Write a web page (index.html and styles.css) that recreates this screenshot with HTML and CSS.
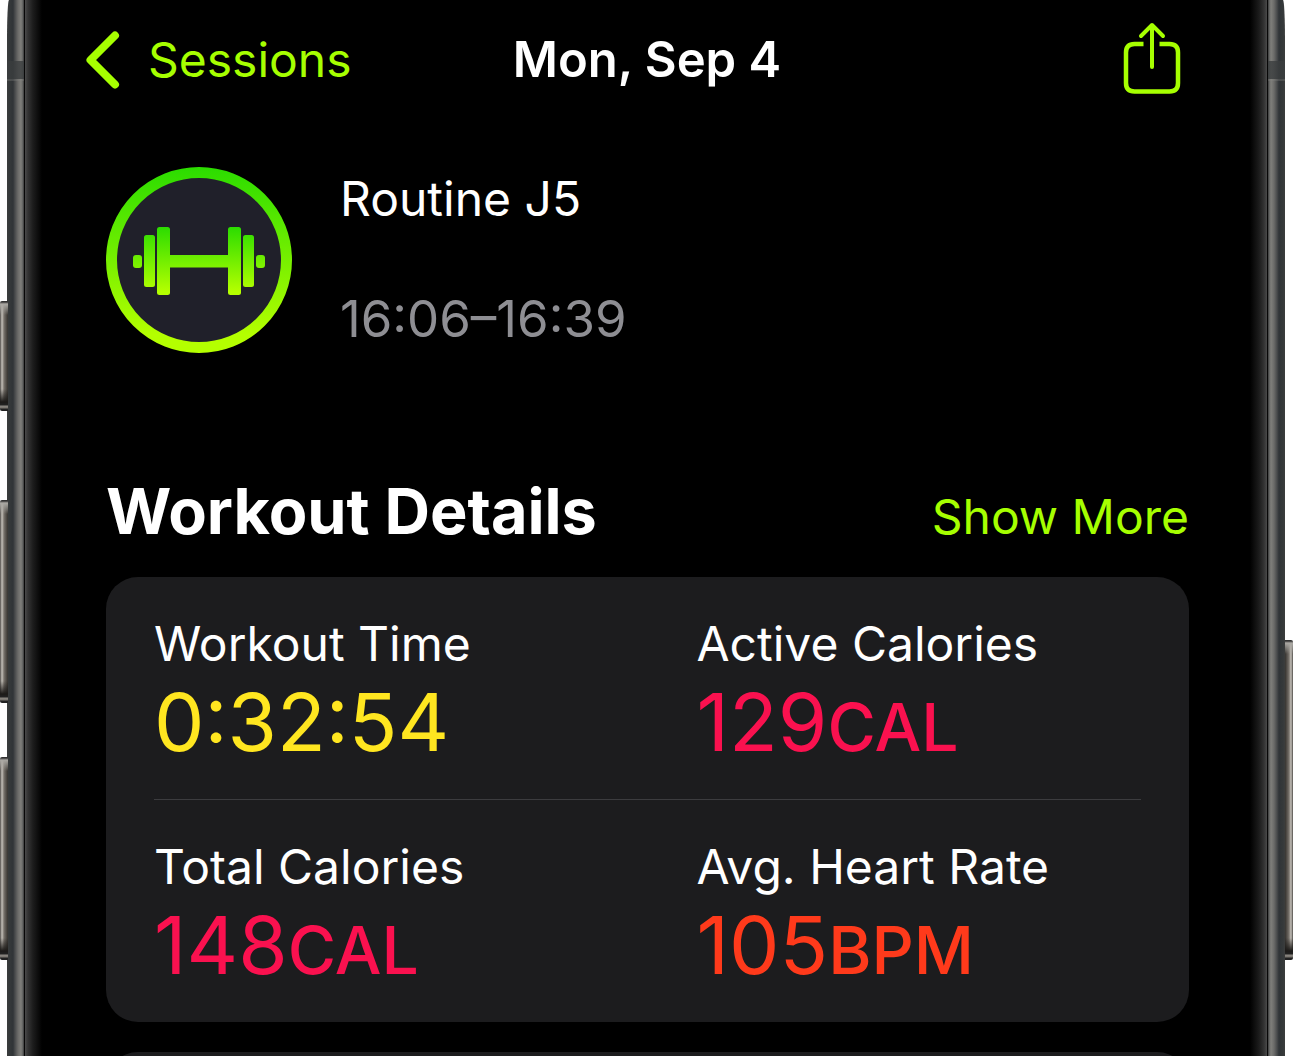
FILE: index.html
```html
<!DOCTYPE html>
<html lang="en">
<head>
<meta charset="utf-8">
<meta name="viewport" content="width=device-width, initial-scale=1">
<title>Mon, Sep 4</title>
<link rel="stylesheet" href="styles.css">
</head>
<body>
<div class="phone">
  <span class="key key-action"></span>
  <span class="key key-up"></span>
  <span class="key key-down"></span>
  <span class="key key-side"></span>
  <div class="rail rail-left"></div>
  <div class="screen">
    <header class="nav">
      <a class="back" href="#">
        <svg width="34" height="58" viewBox="0 0 34 58" aria-hidden="true"><path d="M29 4.500 4.500 29 29 53.500" fill="none" stroke="currentColor" stroke-width="8" stroke-linecap="round" stroke-linejoin="round"/></svg>
        Sessions
      </a>
      <h1 class="nav-title">Mon, Sep 4</h1>
      <button class="share" type="button" aria-label="Share">
        <svg width="58" height="72" viewBox="0 0 58 72" aria-hidden="true"><path d="M20.500 22H11.500Q3 22 3 30.500V61Q3 69.500 11.500 69.500H46.500Q55 69.500 55 61V30.500Q55 22 46.500 22H36.500" fill="none" stroke="currentColor" stroke-width="4.500"/><path d="M29 45V3M18 14 29 3 40 14" fill="none" stroke="currentColor" stroke-width="4" stroke-linecap="round" stroke-linejoin="round"/></svg>
      </button>
    </header>
    <main class="content">
      <section class="workout">
        <svg class="badge" width="186" height="186" viewBox="0 0 186 186" aria-hidden="true">
          <defs>
            <linearGradient id="ring" x1="0" y1="0" x2="0" y2="186" gradientUnits="userSpaceOnUse"><stop offset="0" stop-color="#2bdc00"/><stop offset=".9" stop-color="#b4ff00"/></linearGradient>
            <linearGradient id="bar" x1="0" y1="60" x2="0" y2="128" gradientUnits="userSpaceOnUse"><stop offset="0" stop-color="#2bdc00"/><stop offset=".95" stop-color="#b4ff00"/></linearGradient>
          </defs>
          <circle cx="93" cy="93" r="87.500" fill="#20202a" stroke="url(#ring)" stroke-width="11"/>
          <g fill="url(#bar)">
            <rect x="27" y="88" width="9" height="13" rx="3"/>
            <rect x="38" y="68" width="11" height="52" rx="2.500"/>
            <rect x="51" y="60" width="13" height="68" rx="2.500"/>
            <path d="M63 88H123V100.500H63Z"/>
            <rect x="122" y="60" width="13" height="68" rx="2.500"/>
            <rect x="137" y="68" width="11" height="52" rx="2.500"/>
            <rect x="150" y="88" width="9" height="13" rx="3"/>
          </g>
        </svg>
        <div class="workout-text">
          <p>Routine J5</p>
          <p class="period">16:06–16:39</p>
        </div>
      </section>
      <section>
        <div class="section-head">
          <h2>Workout Details</h2>
          <a href="#">Show More</a>
        </div>
        <div class="card">
          <dl class="row">
            <div><dt>Workout Time</dt><dd class="time">0:32:54</dd></div>
            <div><dt>Active Calories</dt><dd class="calories">129<span class="unit">CAL</span></dd></div>
          </dl>
          <dl class="row">
            <div><dt>Total Calories</dt><dd class="calories">148<span class="unit">CAL</span></dd></div>
            <div><dt>Avg. Heart Rate</dt><dd class="heart">105<span class="unit">BPM</span></dd></div>
          </dl>
        </div>
        <div class="card card-next"></div>
      </section>
    </main>
  </div>
  <div class="rail rail-right"></div>
</div>
</body>
</html>
```
FILE: styles.css
```css
* {
  box-sizing: border-box;
}

body {
  margin: 0;
  background: #fff;
  color: #fff;
  font-family: Inter, "Liberation Sans", sans-serif;
  font-size: 48px;
  line-height: 60px;
}

h1, h2, p, dl, dd {
  margin: 0;
}

a {
  color: #a6ff00;
  text-decoration: none;
}

.phone {
  position: relative;
  display: flex;
  height: 100vh;
  padding: 0 8px 0 7px;
  overflow: hidden;
}

.rail {
  flex: none;
  width: 17px;
  background:
    linear-gradient(transparent 61px, #3a3d3ecc 61px, #3a3d3ecc 79px, #8585824d 79px, #8585824d 81px, transparent 81px),
    linear-gradient(90deg, #3c3d3d, #35393a 2px, #303437 6px, #494b4c 8px, #6b6b69 11px, #7f7f7b 14px, #5d5e5d 16px, #333 17px);
}

.rail-left {
  border-top-left-radius: 2px 40px;
}

.rail-right {
  transform: scaleX(-1);
  border-top-left-radius: 2px 40px;
}

.key {
  position: absolute;
  left: 0;
  width: 8px;
  border-radius: 2px 0 0 2px;
  background:
    linear-gradient(#333 1px, #aaa8a3 3px, transparent 14px, transparent calc(100% - 22px), #1c1a18 calc(100% - 9px), #222 calc(100% - 6px), #8b8781 calc(100% - 5px), #77736d calc(100% - 3px), #222 calc(100% - 2px)),
    linear-gradient(90deg, #4d4a46, #c5c1ba 2px, #77726b 4px, #55514c 6px, #35332f);
}

.key-action {
  top: 301px;
  height: 110px;
}

.key-up {
  top: 500px;
  height: 203px;
}

.key-down {
  top: 757px;
  height: 203px;
}

.key-side {
  top: 640px;
  right: 0;
  left: auto;
  height: 320px;
  transform: scaleX(-1);
}

.screen {
  flex: 1;
  min-width: 0;
  border: solid #080808;
  border-width: 0 1px;
  background:
    linear-gradient(90deg, #4a4a4a, #333 3px, #1c1c1c 8px, #000 17px, transparent 17px),
    linear-gradient(270deg, #4a4a4a, #333 3px, #1c1c1c 8px, #000 17px, transparent 17px),
    #000;
}

.nav {
  display: grid;
  grid-template-columns: 1fr auto 1fr;
  align-items: center;
  height: 120px;
  padding: 0 59px 0 61px;
}

.back {
  display: flex;
  align-items: center;
  gap: 28px;
}

.nav-title {
  font-size: 49px;
  font-weight: 600;
}

.share {
  display: flex;
  justify-self: end;
  padding: 0 27px 4px 0;
  border: 0;
  background: none;
  color: #a6ff00;
}

.content {
  padding: 47px 78px 0 81px;
}

.workout {
  display: flex;
  gap: 48px;
  margin-bottom: 118px;
}

.badge {
  flex: none;
}

.workout-text {
  display: flex;
  flex-direction: column;
  justify-content: space-between;
  padding: 2px 0 4px;
}

.period {
  color: #8e8e93;
  font-size: 51px;
}

.section-head {
  display: flex;
  align-items: baseline;
  justify-content: space-between;
  margin-bottom: 26px;
}

h2 {
  font-size: 63px;
  font-weight: 700;
  line-height: 80px;
}

.card {
  padding: 0 48px;
  border-radius: 32px;
  background: #1c1c1e;
}

.card-next {
  height: 446px;
  margin-top: 30px;
}

.row {
  display: grid;
  grid-template-columns: 1fr 1fr;
  column-gap: 98px;
  padding: 37px 0 29px;
  white-space: nowrap;
}

.row + .row {
  border-top: 1px solid #3c3c3f;
}

dd {
  font-size: 80px;
  line-height: 96px;
}

.unit {
  font-size: 66px;
  font-weight: 500;
  line-height: 66px;
}

.time {
  color: #ffe620;
}

.calories {
  color: #fa114f;
}

.heart {
  color: #ff3a1b;
}
```
